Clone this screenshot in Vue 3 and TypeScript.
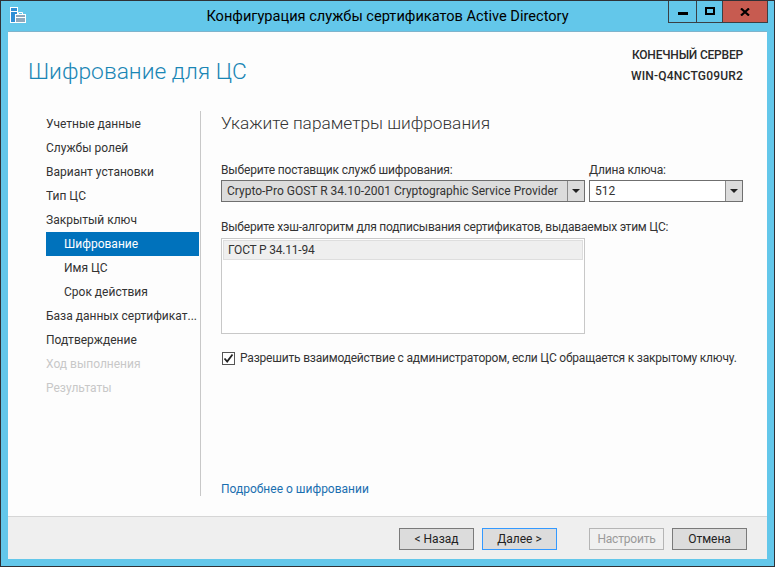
<script setup lang="ts">
interface NavItem { label: string; sub?: boolean; active?: boolean; disabled?: boolean }
const nav: NavItem[] = [
  { label: 'Учетные данные' },
  { label: 'Службы ролей' },
  { label: 'Вариант установки' },
  { label: 'Тип ЦС' },
  { label: 'Закрытый ключ' },
  { label: 'Шифрование', sub: true, active: true },
  { label: 'Имя ЦС', sub: true },
  { label: 'Срок действия', sub: true },
  { label: 'База данных сертификат...' },
  { label: 'Подтверждение' },
  { label: 'Ход выполнения', disabled: true },
  { label: 'Результаты', disabled: true },
]
</script>

<template>
  <div class="window">
    <header class="titlebar">
      <svg class="app-icon" width="16" height="16" viewBox="0 0 16 16">
        <rect x="0.5" y="0.5" width="7" height="15" fill="#2f8fd6" stroke="#fff" />
        <rect x="1" y="4" width="6" height="1" fill="#fff" />
        <rect x="5.5" y="7.5" width="10" height="8" fill="#8fa9bd" stroke="#fff" />
        <path d="M8.5 7.5v-2h4v2M5.5 10.5h10" fill="none" stroke="#fff" />
      </svg>
      <span class="title">Конфигурация службы сертификатов Active Directory</span>
      <div class="controls">
        <div class="ctl ctl-min"><i></i></div>
        <div class="ctl ctl-max"><i></i></div>
        <div class="ctl ctl-close">
          <svg width="10" height="8" viewBox="0 0 10 8"><path d="M1 0.5L9 7.5M9 0.5L1 7.5" stroke="#000" stroke-width="2.2" fill="none" /></svg>
        </div>
      </div>
    </header>

    <div class="client">
      <div class="body">
        <div class="head">
          <h1>Шифрование для ЦС</h1>
          <div class="server">
            <div class="srv-a">КОНЕЧНЫЙ СЕРВЕР</div>
            <div class="srv-b">WIN-Q4NCTG09UR2</div>
          </div>
        </div>

        <div class="columns">
          <nav class="nav">
            <div
              v-for="item in nav"
              :key="item.label"
              class="nav-item"
              :class="{ sub: item.sub, active: item.active, disabled: item.disabled }"
            >{{ item.label }}</div>
          </nav>

          <main class="content">
            <h2>Укажите параметры шифрования</h2>

            <div class="row-selects">
              <div class="field provider">
                <label>Выберите поставщик служб шифрования:</label>
                <div class="combo combo-grey">
                  <span class="combo-text">Crypto-Pro GOST R 34.10-2001 Cryptographic Service Provider</span>
                  <span class="combo-btn"><i></i></span>
                </div>
              </div>
              <div class="field keylen">
                <label>Длина ключа:</label>
                <div class="combo">
                  <span class="combo-text">512</span>
                  <span class="combo-btn"><i></i></span>
                </div>
              </div>
            </div>

            <label class="hash-label">Выберите хэш-алгоритм для подписывания сертификатов, выдаваемых этим ЦС:</label>
            <div class="listbox">
              <div class="list-row">ГОСТ Р 34.11-94</div>
            </div>

            <div class="check">
              <span class="checkbox">
                <svg width="11" height="11" viewBox="0 0 11 11"><path d="M1.5 5.5L4.2 8.5L9.5 1.5" fill="none" stroke="#222" stroke-width="1.8" /></svg>
              </span>
              <span class="check-text">Разрешить взаимодействие с администратором, если ЦС обращается к закрытому ключу.</span>
            </div>

            <a class="more">Подробнее о шифровании</a>
          </main>
        </div>
      </div>

      <footer class="footer">
        <button class="btn">&lt; Назад</button>
        <button class="btn btn-focus">Далее &gt;</button>
        <button class="btn btn-disabled">Настроить</button>
        <button class="btn">Отмена</button>
      </footer>
    </div>
  </div>
</template>

<style>
html, body { margin: 0; padding: 0; }
</style>

<style scoped>
.window {
  box-sizing: border-box;
  width: 775px;
  height: 567px;
  display: flex;
  flex-direction: column;
  background: #63c7ea;
  border: 1px solid #2f3136;
  font-family: Roboto, "Noto Sans", sans-serif;
  font-size: 12px;
  color: #333;
  overflow: hidden;
}
.titlebar {
  height: 30px;
  flex: none;
  display: flex;
  align-items: flex-start;
  position: relative;
}
.app-icon { position: absolute; left: 9px; top: 6px; }
.title {
  flex: 1;
  text-align: center;
  font-size: 14.6px;
  line-height: 30px;
  color: #000;
}
.controls {
  position: absolute;
  right: 6px;
  top: 0;
  display: flex;
  height: 21px;
  border: solid #3a3f44;
  border-width: 0 1px 1px 1px;
}
.ctl {
  height: 21px;
  display: flex;
  align-items: center;
  justify-content: center;
}
.ctl-min { width: 27px; border-right: 1px solid #3a3f44; }
.ctl-min i { display: block; width: 10px; height: 3px; background: #000; margin-top: 4px; }
.ctl-max { width: 25px; border-right: 1px solid #3a3f44; }
.ctl-max i { display: block; width: 6px; height: 4px; border: 2px solid #000; margin-top: -1px; }
.ctl-close { width: 44px; background: #c75b50; }
.client {
  flex: 1;
  margin: 0 7px 7px;
  display: flex;
  flex-direction: column;
  background: #fdfdfd;
  border-top: 1px solid #7fb4cc;
  min-height: 0;
}
.body { flex: 1; display: flex; flex-direction: column; min-height: 0; }
.head {
  height: 79px;
  flex: none;
  display: flex;
  justify-content: space-between;
  box-sizing: border-box;
  padding: 0 24px 0 20px;
}
h1 {
  margin: 23px 0 0;
  font-size: 22.8px;
  font-weight: 300;
  line-height: 33px;
  color: #1a86b5;
}
.server {
  margin-top: 13px;
  text-align: right;
  font-size: 12px;
  font-weight: 500;
  line-height: 21px;
  color: #2a2a2a;
}
.srv-a { letter-spacing: -0.2px; }
.srv-b { letter-spacing: 0.2px; }
.columns { flex: 1; display: flex; min-height: 0; padding-bottom: 20px; }
.nav {
  width: 153px;
  margin-left: 38px;
  padding-top: 1px;
  flex: none;
}
.nav-item {
  height: 24px;
  line-height: 24px;
  color: #333;
  white-space: nowrap;
  overflow: hidden;
}
.nav-item.sub { padding-left: 18px; }
.nav-item.active { background: #0072bc; color: #fff; }
.nav-item.disabled { color: #c8c8c8; }
.content {
  flex: 1;
  margin-left: 1px;
  padding-left: 20px;
  border-left: 1px solid #c8c8c8;
  display: flex;
  flex-direction: column;
  min-width: 0;
}
h2 {
  margin: 0;
  font-size: 17.3px;
  font-weight: 300;
  line-height: 24px;
  color: #333;
}
.row-selects { display: flex; gap: 4px; margin-top: 26px; }
.field label { display: block; line-height: 19px; letter-spacing: -0.15px; }
.provider { width: 364px; }
.keylen { width: 154px; }
.combo {
  box-sizing: border-box;
  height: 22px;
  border: 1px solid #6f6f6f;
  background: #fff;
  display: flex;
  align-items: center;
}
.combo-grey { background: #dcdcdc; }
.combo-text {
  flex: 1;
  padding-left: 5px;
  white-space: nowrap;
  overflow: hidden;
  color: #333;
}
.combo-btn {
  flex: none;
  width: 17px;
  height: 20px;
  box-sizing: border-box;
  border-left: 1px solid #8a8a8a;
  background: #dcdcdc;
  display: flex;
  align-items: center;
  justify-content: center;
}
.combo-btn i {
  display: block;
  border-style: solid;
  border-width: 4px 4px 0;
  border-color: #222 transparent transparent;
}
.hash-label { display: block; line-height: 18px; margin-top: 16px; letter-spacing: -0.21px; }
.listbox {
  box-sizing: border-box;
  width: 364px;
  height: 96px;
  margin-top: 2px;
  border: 1px solid #c8c8c8;
  background: #fff;
  padding: 1px;
}
.list-row {
  box-sizing: border-box;
  height: 20px;
  line-height: 19px;
  background: #efefef;
  border: 1px solid #dedede;
  padding-left: 4px;
  letter-spacing: -0.2px;
}
.check {
  display: flex;
  align-items: center;
  gap: 5px;
  margin-top: 15px;
  height: 18px;
  margin-left: 1px;
  white-space: nowrap;
}
.check-text { letter-spacing: -0.2px; }
.checkbox {
  box-sizing: border-box;
  width: 13px;
  height: 13px;
  border: 1px solid #555;
  background: #fff;
  display: flex;
  align-items: center;
  justify-content: center;
  flex: none;
}
.more {
  margin-top: auto;
  color: #1a6fb0;
  line-height: 18px;
  margin-bottom: -2px;
}
.footer {
  flex: none;
  height: 43px;
  box-sizing: border-box;
  background: #efefef;
  border-top: 1px solid #d6d6d6;
  display: flex;
  align-items: flex-start;
  padding: 11px 20px 0 391px;
}
.btn {
  box-sizing: border-box;
  width: 75px;
  height: 22px;
  padding: 0;
  border: 1px solid #7a7a7a;
  background: #dcdcdc;
  font: inherit;
  color: #222;
  margin-right: 8px;
}
.btn:nth-child(2) { margin-right: 32px; }
.btn:nth-child(3) { margin-right: 8px; }
.btn:last-child { margin-right: 0; }
.btn-focus { border-color: #3399ff; }
.btn-disabled { background: #f0f0f0; border-color: #b5b5b5; color: #9a9a9a; letter-spacing: -0.2px; }
</style>
